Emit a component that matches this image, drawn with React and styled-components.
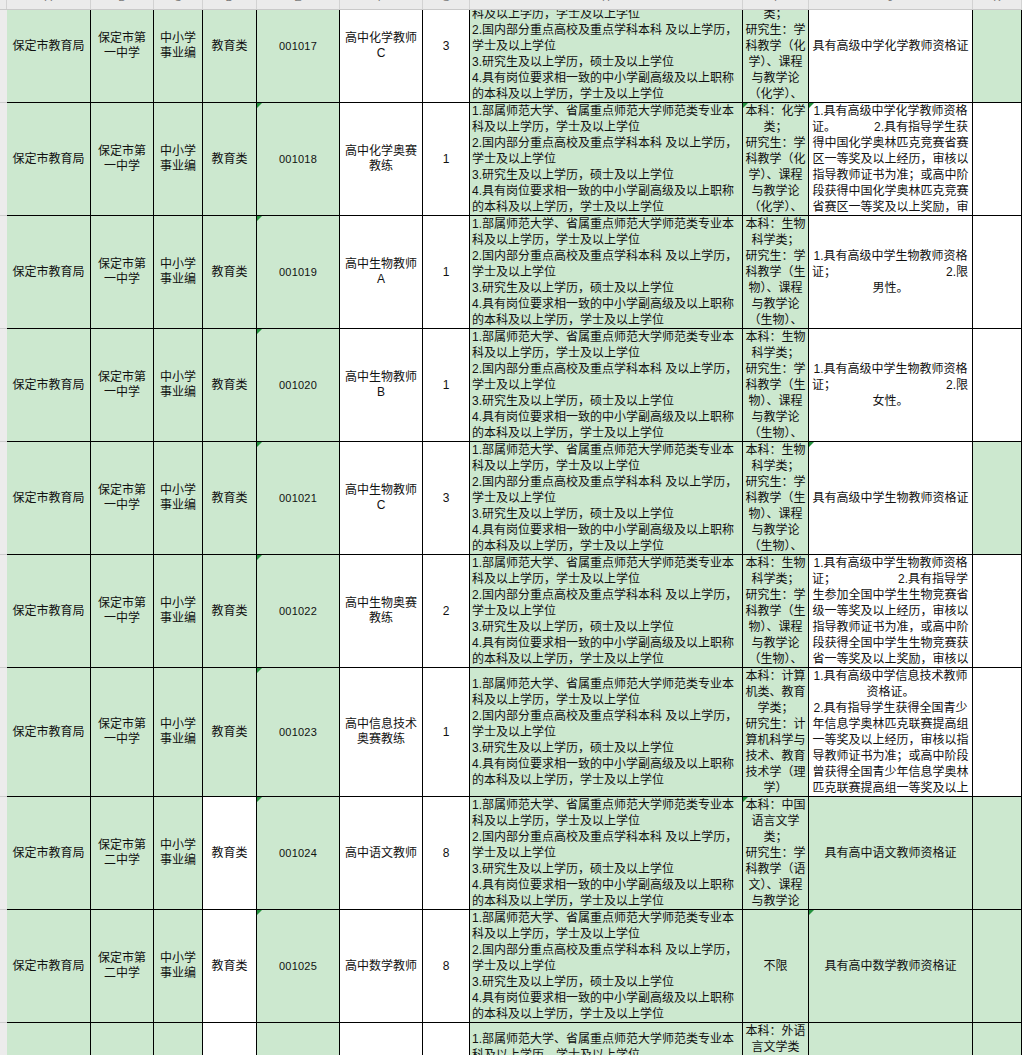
import React, { useLayoutEffect, useRef } from 'react';
import styled, { createGlobalStyle, css } from 'styled-components';

const GlobalStyle = createGlobalStyle`
  html, body {
    margin: 0;
    padding: 0;
    background: #fff;
    overflow: hidden;
  }
  * { box-sizing: border-box; }
`;

const GREEN = '#cce8cf';
const COLUMNS = '7px 84px 63px 49px 54px 83px 83px 47px 273px 66px 164px 49px';

// Styles
const Sheet = styled.div`
  width: 1022px;
  height: 1055px;
  display: flex;
  flex-direction: column;
  font-family: 'Liberation Sans', 'Noto Sans CJK SC', sans-serif;
  font-size: 12px;
  color: #111;
`;

const ColHeader = styled.div`
  display: grid;
  grid-template-columns: ${COLUMNS};
  height: 10px;
  flex: none;
  background: #ebebeb;
  border-bottom: 1px solid #c9c9c9;
`;

const ColLetter = styled.div`
  height: 9px;
  overflow: hidden;
  display: flex;
  align-items: flex-end;
  justify-content: center;
  padding-bottom: 6px;
  border-right: 1px solid #d2d2d2;
  color: #7a7a7a;
  font-size: 11px;
  line-height: 11px;
`;

const Viewport = styled.div`
  flex: 1;
  overflow: hidden;
`;

const Row = styled.div`
  display: grid;
  grid-template-columns: ${COLUMNS};
  height: ${p => p.$h}px;
`;

const RowHead = styled.div`
  background: #ececec;
  border-bottom: 1px solid #cdcdcd;
`;

const Cell = styled.div`
  position: relative;
  background: ${p => (p.$green ? GREEN : '#fff')};
  border-right: 1px solid #000;
  border-bottom: 1px solid #000;
  display: flex;
  flex-direction: column;
  justify-content: ${p => (p.$top ? 'flex-start' : 'center')};
  text-align: ${p => p.$align || 'center'};
  padding: 0 2px;
  overflow: hidden;
  --lh: ${p => p.$lh || 16}px;
  ${p =>
    p.$mark &&
    css`
      &::before {
        content: '';
        position: absolute;
        top: 0;
        left: 0;
        border-top: 5px solid #23913d;
        border-right: 5px solid transparent;
      }
    `}
`;

const Line = styled.div`
  white-space: nowrap;
  height: var(--lh);
  line-height: var(--lh);
  flex: none;
`;

const Spread = styled(Line)`
  display: flex;
  justify-content: space-between;
  padding: 0 2px 0 1px;
`;

const Code = styled(Line)`
  font-size: 11px;
  letter-spacing: 0.2px;
`;

// Data
const LETTERS = ['A', 'B', 'C', 'D', 'E', 'F', 'G', 'H', 'I', 'J', 'K'];

const EDU = [
  '1.部属师范大学、省属重点师范大学师范类专业本',
  '科及以上学历，学士及以上学位',
  '2.国内部分重点高校及重点学科本科 及以上学历，',
  '学士及以上学位',
  '3.研究生及以上学历，硕士及以上学位',
  '4.具有岗位要求相一致的中小学副高级及以上职称',
  '的本科及以上学历，学士及以上学位',
];

const CHEM = ['本科：化学', '类；', '研究生：学', '科教学（化', '学）、课程', '与教学论', '（化学）、'];
const BIO = ['本科：生物', '科学类；', '研究生：学', '科教学（生', '物）、课程', '与教学论', '（生物）、'];
const IT = ['本科：计算', '机类、教育', '学类；', '研究生：计', '算机科学与', '技术、教育', '技术学（理', '学）'];
const CN = ['本科：中国', '语言文学', '类；', '研究生：学', '科教学（语', '文）、课程', '与教学论'];
const EN = ['本科：外语', '言文学类', '；', '研究生：学', '科教学（英', '语）、课程', '与教学论', '（英语）'];

const bioGender = g => [
  '1.具有高级中学生物教师资格',
  ['证；', '2.限'],
  g,
];

const ROWS = [
  {
    h: 113, code: '001017', school: '一中学', post: ['高中化学教师', 'C'], n: '3',
    major: CHEM, qual: ['具有高级中学化学教师资格证'],
    bg: 'GGGGGWWGGWG', marks: '',
  },
  {
    h: 113, code: '001018', school: '一中学', post: ['高中化学奥赛', '教练'], n: '1',
    major: CHEM, qualTop: true,
    qual: [
      '1.具有高级中学化学教师资格',
      ['证。', '2.具有指导学生获'],
      '得中国化学奥林匹克竞赛省赛',
      '区一等奖及以上经历，审核以',
      '指导教师证书为准；或高中阶',
      '段获得中国化学奥林匹克竞赛',
      '省赛区一等奖及以上奖励，审',
    ],
    bg: 'GGGGGWWGGWW', marks: 'EIJ',
  },
  {
    h: 113, code: '001019', school: '一中学', post: ['高中生物教师', 'A'], n: '1',
    major: BIO, qual: bioGender('男性。'),
    bg: 'GGGGGWWGGWW', marks: 'E',
  },
  {
    h: 113, code: '001020', school: '一中学', post: ['高中生物教师', 'B'], n: '1',
    major: BIO, qual: bioGender('女性。'),
    bg: 'GGGGGWWGGWW', marks: 'E',
  },
  {
    h: 113, code: '001021', school: '一中学', post: ['高中生物教师', 'C'], n: '3',
    major: BIO, qual: ['具有高级中学生物教师资格证'],
    bg: 'GGGGGWWGGWG', marks: 'EJ',
  },
  {
    h: 113, code: '001022', school: '一中学', post: ['高中生物奥赛', '教练'], n: '2',
    major: BIO, qualTop: true,
    qual: [
      '1.具有高级中学生物教师资格',
      ['证；', '2.具有指导学'],
      '生参加全国中学生生物竞赛省',
      '级一等奖及以上经历，审核以',
      '指导教师证书为准，或高中阶',
      '段获得全国中学生生物竞赛获',
      '省一等奖及以上奖励，审核以',
    ],
    bg: 'GGGGGWWGGWW', marks: 'E',
  },
  {
    h: 129, code: '001023', school: '一中学', post: ['高中信息技术', '奥赛教练'], n: '1',
    major: IT, qualTop: true,
    qual: [
      '1.具有高级中学信息技术教师',
      '资格证。',
      '2.具有指导学生获得全国青少',
      '年信息学奥林匹克联赛提高组',
      '一等奖及以上经历，审核以指',
      '导教师证书为准；或高中阶段',
      '曾获得全国青少年信息学奥林',
      '匹克联赛提高组一等奖及以上',
    ],
    bg: 'GGGGGWWGGWW', marks: 'E',
  },
  {
    h: 113, code: '001024', school: '二中学', post: ['高中语文教师'], n: '8',
    major: CN, qual: ['具有高中语文教师资格证'],
    bg: 'GGGWGWWGGGG', marks: 'EI',
  },
  {
    h: 113, code: '001025', school: '二中学', post: ['高中数学教师'], n: '8',
    major: ['不限'], qual: ['具有高中数学教师资格证'],
    bg: 'GGGWGWWGGGG', marks: 'EJ',
  },
  {
    h: 129, code: '001026', school: '二中学', post: ['高中英语教师'], n: '6',
    major: EN, majorTop: true, qual: ['具有高中英语教师资格证'],
    bg: 'GGGWGWWGGGG', marks: '',
  },
];

const Lines = ({ items }) =>
  items.map((item, i) =>
    Array.isArray(item) ? (
      <Spread key={i}>
        <span>{item[0]}</span>
        <span>{item[1]}</span>
      </Spread>
    ) : (
      <Line key={i}>{item}</Line>
    )
  );

const JobRow = ({ row }) => {
  const green = col => row.bg[LETTERS.indexOf(col)] === 'G';
  const mark = col => row.marks.includes(col);
  const cell = col => ({ $green: green(col), $mark: mark(col) });
  return (
    <Row $h={row.h}>
      <RowHead />
      <Cell {...cell('A')}>
        <Line>保定市教育局</Line>
      </Cell>
      <Cell {...cell('B')} $lh={15}>
        <Lines items={['保定市第', row.school]} />
      </Cell>
      <Cell {...cell('C')} $lh={15}>
        <Lines items={['中小学', '事业编']} />
      </Cell>
      <Cell {...cell('D')}>
        <Line>教育类</Line>
      </Cell>
      <Cell {...cell('E')}>
        <Code>{row.code}</Code>
      </Cell>
      <Cell {...cell('F')} $lh={15}>
        <Lines items={row.post} />
      </Cell>
      <Cell {...cell('G')}>
        <Line>{row.n}</Line>
      </Cell>
      <Cell {...cell('H')} $align="left">
        <Lines items={EDU} />
      </Cell>
      <Cell {...cell('I')} $top={row.majorTop}>
        <Lines items={row.major} />
      </Cell>
      <Cell {...cell('J')} $top={row.qualTop}>
        <Lines items={row.qual} />
      </Cell>
      <Cell {...cell('K')} />
    </Row>
  );
};

export default function App() {
  const viewRef = useRef(null);
  // the sheet is scrolled a little: the first row sits partly under the header
  useLayoutEffect(() => {
    if (viewRef.current) viewRef.current.scrollTop = 20;
  }, []);
  return (
    <>
      <GlobalStyle />
      <Sheet>
        <ColHeader>
          <ColLetter />
          {LETTERS.map(l => (
            <ColLetter key={l}>
              <span>{l}</span>
            </ColLetter>
          ))}
        </ColHeader>
        <Viewport ref={viewRef}>
          {ROWS.map(row => (
            <JobRow key={row.code} row={row} />
          ))}
        </Viewport>
      </Sheet>
    </>
  );
}
